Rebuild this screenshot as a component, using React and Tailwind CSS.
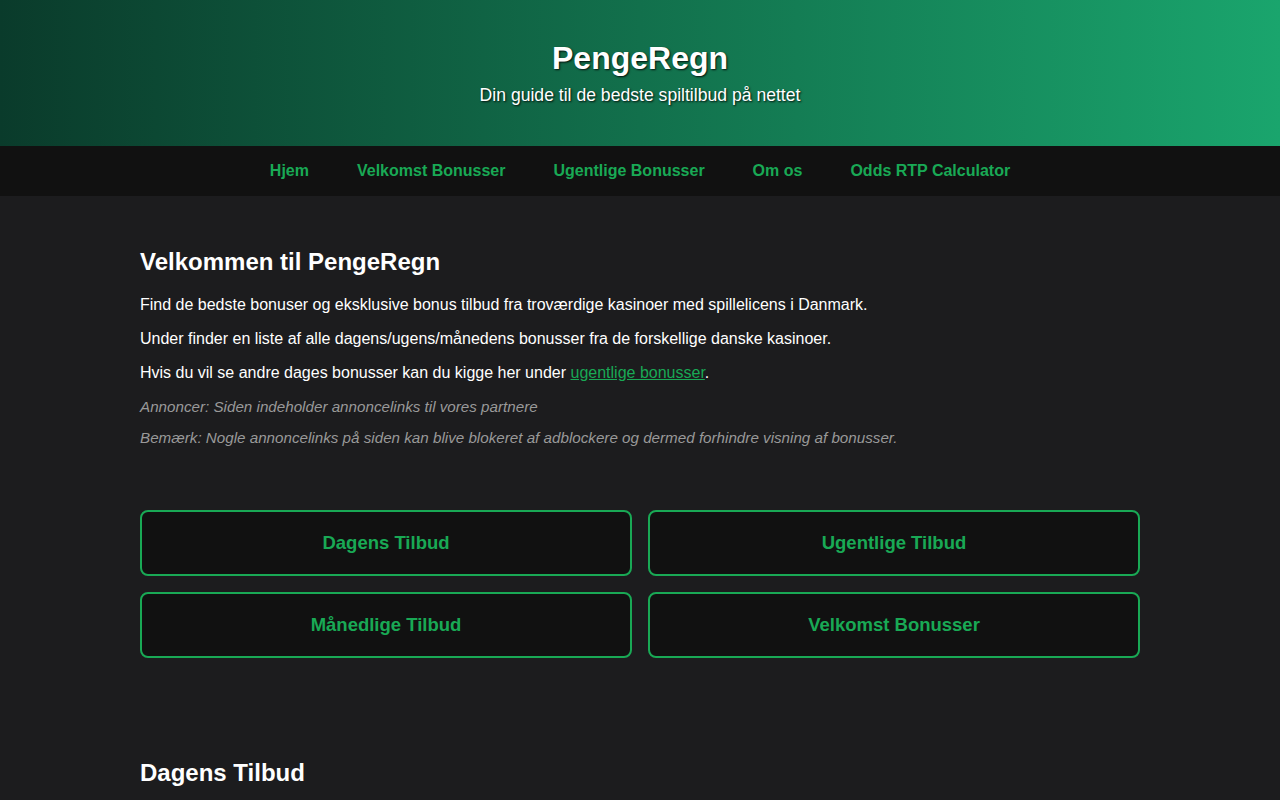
import React from 'react';

const navLinks = ['Hjem', 'Velkomst Bonusser', 'Ugentlige Bonusser', 'Om os', 'Odds RTP Calculator'];
const offerButtons = ['Dagens Tilbud', 'Ugentlige Tilbud', 'Månedlige Tilbud', 'Velkomst Bonusser'];

export default function App() {
  return (
    <div className="min-h-screen bg-[#1c1c1e] text-white font-['Liberation_Sans',Arial,sans-serif]">
      <header className="bg-[linear-gradient(to_right,#0a3b2b,#1aa56d)] pt-10 pb-[41px] text-center">
        <h1 className="text-[32px] leading-[37px] font-bold [text-shadow:1px_1px_2px_rgba(0,0,0,0.85)]">PengeRegn</h1>
        <p className="mt-2 text-[17.6px] leading-[20px] [text-shadow:1px_1px_2px_rgba(0,0,0,0.85)]">
          Din guide til de bedste spiltilbud på nettet
        </p>
      </header>

      <nav className="bg-[#111111] h-[50px] flex items-center justify-center">
        {navLinks.map((link) => (
          <a key={link} href="#" className="px-6 text-[16px] font-bold text-[#19a955]">
            {link}
          </a>
        ))}
      </nav>

      <main className="max-w-[1000px] mx-auto pt-[52px]">
        <section>
          <h2 className="text-[24px] leading-[28px] font-bold">Velkommen til PengeRegn</h2>
          <p className="mt-5 text-[16px] leading-[18px]">
            Find de bedste bonuser og eksklusive bonus tilbud fra troværdige kasinoer med spillelicens i Danmark.
          </p>
          <p className="mt-4 text-[16px] leading-[18px]">
            Under finder en liste af alle dagens/ugens/månedens bonusser fra de forskellige danske kasinoer.
          </p>
          <p className="mt-4 text-[16px] leading-[18px]">
            Hvis du vil se andre dages bonusser kan du kigge her under{' '}
            <a href="#" className="text-[#19a955] underline">ugentlige bonusser</a>.
          </p>
          <p className="mt-4 text-[15.2px] leading-[17px] italic text-[#999999]">
            Annoncer: Siden indeholder annoncelinks til vores partnere
          </p>
          <p className="mt-[14px] text-[15.2px] leading-[17px] italic text-[#999999]">
            Bemærk: Nogle annoncelinks på siden kan blive blokeret af adblockere og dermed forhindre visning af bonusser.
          </p>
        </section>

        <div className="mt-16 grid grid-cols-2 gap-4">
          {offerButtons.map((label) => (
            <button
              key={label}
              className="h-[66px] rounded-lg border-2 border-[#19a955] bg-[#111111] text-[18.5px] font-bold text-[#19a955]"
            >
              {label}
            </button>
          ))}
        </div>

        <h2 className="mt-[101px] text-[24px] leading-[28px] font-bold">Dagens Tilbud</h2>
      </main>
    </div>
  );
}
